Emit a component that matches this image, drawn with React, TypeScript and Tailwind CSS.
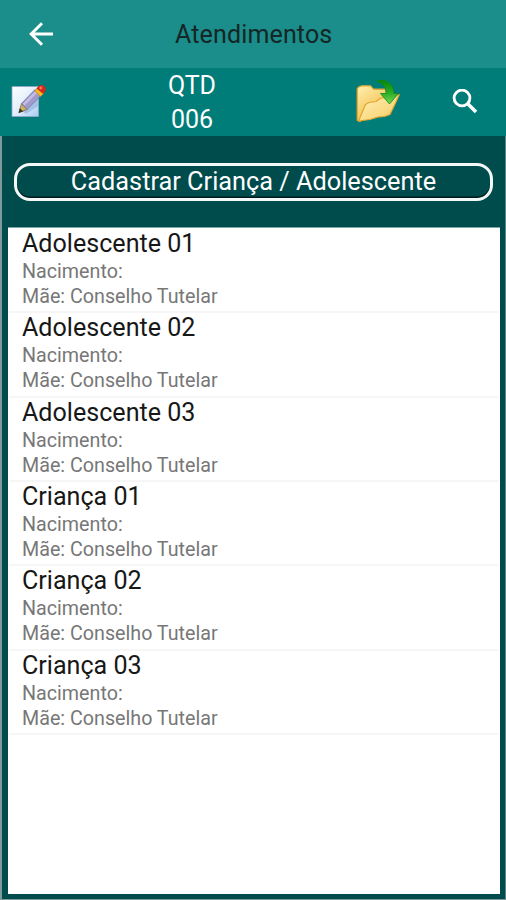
const registros = [
    { id: 1, nome: "Adolescente 01", nascimento: "", mae: "Conselho Tutelar" },
    { id: 2, nome: "Adolescente 02", nascimento: "", mae: "Conselho Tutelar" },
    { id: 3, nome: "Adolescente 03", nascimento: "", mae: "Conselho Tutelar" },
    { id: 4, nome: "Criança 01", nascimento: "", mae: "Conselho Tutelar" },
    { id: 5, nome: "Criança 02", nascimento: "", mae: "Conselho Tutelar" },
    { id: 6, nome: "Criança 03", nascimento: "", mae: "Conselho Tutelar" },
];

function BackIcon() {
    return (
        <svg className="w-6 h-6" viewBox="0 0 24 24" fill="none" stroke="#fff" strokeWidth="3">
            <path d="M24 12H2.5M13 1.2L2.2 12L13 22.8" />
        </svg>
    );
}

function SearchIcon() {
    return (
        <svg className="w-[26px] h-[26px]" viewBox="0 0 26 26" fill="none" stroke="#fff">
            <circle cx="10" cy="9" r="7.9" strokeWidth="2.8" />
            <path d="M15.5 14.5L24 23" strokeWidth="3.6" />
        </svg>
    );
}

function EditIcon() {
    return (
        <svg className="w-9 h-9" viewBox="0 0 36 36">
            <defs>
                <linearGradient id="page" x1="0" y1="0" x2="1" y2="1">
                    <stop offset="0" stopColor="#ffffff" />
                    <stop offset="0.5" stopColor="#e3effc" />
                    <stop offset="1" stopColor="#a9cdf2" />
                </linearGradient>
            </defs>
            <path d="M2 2.5H28.5V32.5H2Z" fill="url(#page)" stroke="#8fa6cc" strokeWidth="0.8" />
            <path d="M12 27L28 11V22L16 30Z" fill="#7fa6d2" opacity="0.5" />
            <path d="M9 28.5L11.5 19.5L17 25.5Z" fill="#d3b25e" stroke="#6f6042" strokeWidth="0.7" />
            <path d="M8.5 29L9.8 24.2L13.3 27.4Z" fill="#3b3526" />
            <path d="M11.5 19.5L25 5.5L31 11.5L17 25.5Z" fill="#a09bcc" stroke="#77729f" strokeWidth="0.8" />
            <path d="M13.8 20.6L26.3 7.8" stroke="#c4c0e4" strokeWidth="2.4" />
            <path d="M25 7L27.5 3.5L33.5 9.5L30.5 12.5Z" fill="#f6b81a" stroke="#c98812" strokeWidth="0.6" />
            <path d="M26.5 4.5L29 1.8Q32 0 34.5 2.5Q36.5 5 35 7.5L33 9.8Z" fill="#d8281a" />
            <circle cx="30.8" cy="4" r="1.4" fill="#f47a60" />
        </svg>
    );
}

function FolderIcon() {
    return (
        <svg className="w-[46px] h-[46px]" viewBox="0 0 46 46">
            <defs>
                <linearGradient id="folder" x1="0" y1="0" x2="0.6" y2="1">
                    <stop offset="0" stopColor="#fff0b0" />
                    <stop offset="1" stopColor="#f2b73f" />
                </linearGradient>
                <linearGradient id="flap" x1="0" y1="0" x2="1" y2="1">
                    <stop offset="0" stopColor="#fff2bb" />
                    <stop offset="1" stopColor="#f7cb62" />
                </linearGradient>
                <linearGradient id="arrow" x1="0" y1="0" x2="0" y2="1">
                    <stop offset="0" stopColor="#07840c" />
                    <stop offset="0.55" stopColor="#2fae2b" />
                    <stop offset="1" stopColor="#75dc52" />
                </linearGradient>
            </defs>
            <path d="M2.2 9.5L4.5 7.5L7 6.8H15.5L18.5 10.2H34L34.5 24L5 42.5L2.2 41.5Z" fill="url(#folder)" stroke="#e3a52e" strokeWidth="1.2" strokeLinejoin="round" />
            <path d="M3.5 42L10.5 25.5L14 23.5L21 22.5L25 19.5L44.3 15.5L40.5 24L35 35.5L29.5 37.5L23 38L15 40.5Z" fill="url(#flap)" stroke="#e3a52e" strokeWidth="1.2" strokeLinejoin="round" />
            <path d="M21.5 2C30 -0.5 38.5 3.5 39 14.5H43.5L34.5 25L25.5 14.5H31C31 8 28 4.5 21.5 2Z" fill="url(#arrow)" stroke="#0c8a10" strokeWidth="0.8" strokeLinejoin="round" />
        </svg>
    );
}

export default function App() {
    return (
        <div className="flex flex-col w-[506px] h-[900px] overflow-hidden bg-[#004c4c] font-[Roboto,sans-serif]">
            <header className="flex items-center h-[68px] shrink-0 bg-[#1b8d8a]">
                <button className="ml-[29px] w-6"><BackIcon /></button>
                <h1 className="ml-[122px] pt-0.5 text-[25px] leading-8 tracking-[0.15px] text-[#142625] whitespace-nowrap">Atendimentos</h1>
            </header>

            <div className="flex items-center h-[68px] shrink-0 bg-[#007c79] text-white">
                <button className="ml-[10px] w-9"><EditIcon /></button>
                <div className="ml-[96px] w-[100px] text-center text-[25px] leading-[33.5px] pt-px">
                    <div>QTD</div>
                    <div>006</div>
                </div>
                <button className="ml-[113px] w-[46px]"><FolderIcon /></button>
                <button className="ml-[51px] w-[26px]"><SearchIcon /></button>
            </div>

            <main className="flex flex-col flex-1 min-h-0 border-l-2 border-r border-b border-[#819b9c] border-r-[#5c8585] pl-[6px] pr-[5px] pb-[5px]">
                <button className="mt-[27px] ml-[6px] mr-[7px] h-[38px] shrink-0 rounded-[16px] border-[3px] border-[#f2f7f7] shadow-[inset_0_-1.5px_0_#001a1a] text-[25.3px] leading-[30px] text-white whitespace-nowrap">
                    Cadastrar Criança / Adolescente
                </button>

                <ul className="flex-1 mt-[26px] pt-px px-px bg-white border-t border-[#7fa5a5]">
                    {registros.map((registro) => (
                        <li key={registro.id} className="h-[84.35px] pl-[13px] border-b-2 border-[#f6f6f6]">
                            <div className="text-[25.1px] leading-[30px] text-[#171717]">{registro.nome}</div>
                            <div className="text-[19.7px] leading-[25px] text-[#777]">Nacimento: {registro.nascimento}</div>
                            <div className="text-[19.7px] leading-[25px] text-[#777]">Mãe: {registro.mae}</div>
                        </li>
                    ))}
                </ul>
            </main>
        </div>
    );
}
